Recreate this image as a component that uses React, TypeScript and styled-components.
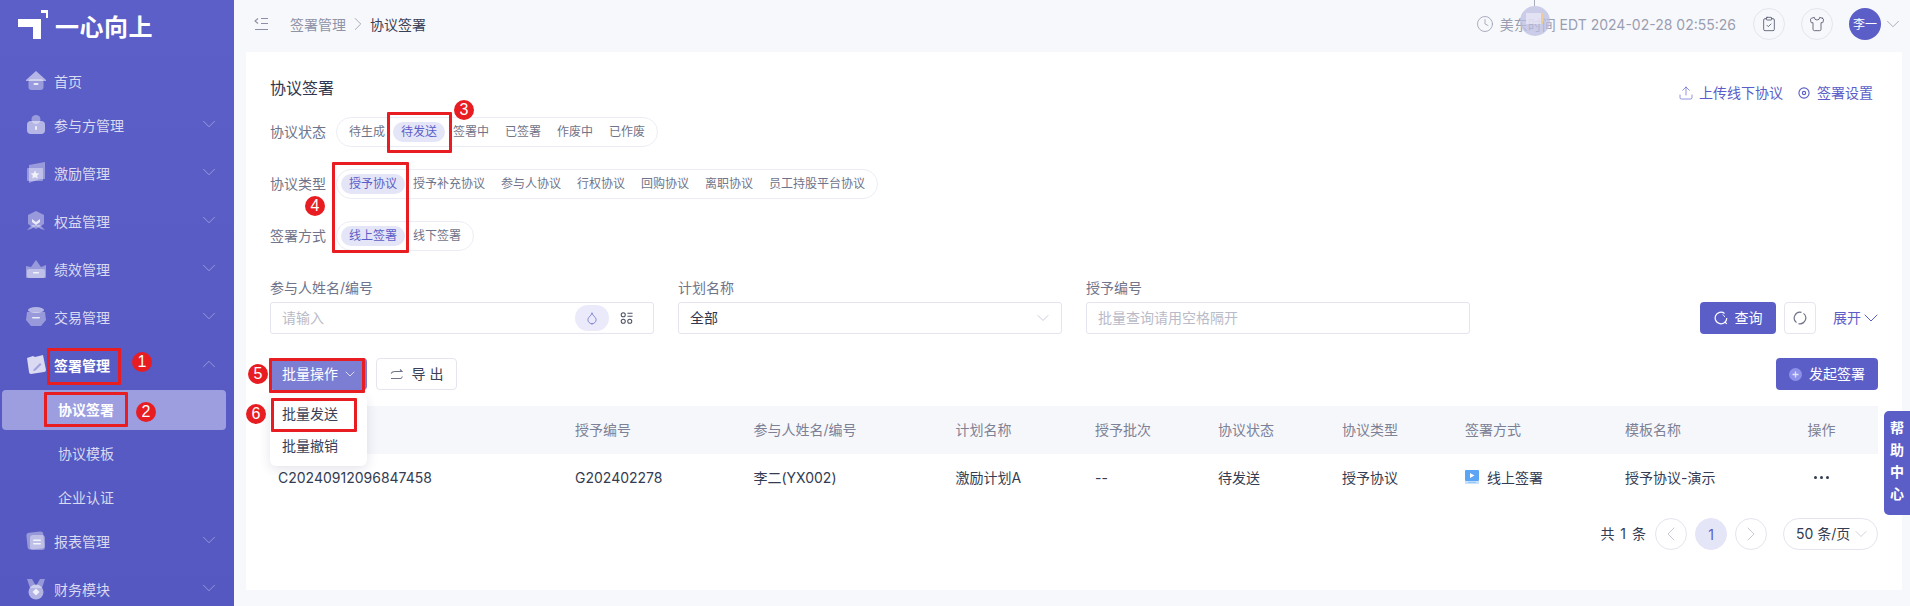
import React from 'react';
import styled, { createGlobalStyle } from 'styled-components';
import {
  ChevronDown,
  ChevronLeft,
  ChevronRight,
  ChevronUp,
  ClipboardCheck,
  Clock,
  Droplet,
  Shirt,
  Upload,
} from 'lucide-react';

const PRIMARY = '#5b5ec7';
const RED = '#e71d22';

const GlobalStyle = createGlobalStyle`
  html, body {
    margin: 0;
    padding: 0;
    background: #f7f8fc;
  }
  body {
    font-family: "Inter", "Noto Sans CJK SC", sans-serif;
    font-size: 14px;
    overflow: hidden;
  }
  * {
    box-sizing: border-box;
  }
`;

type NavKind = 'home' | 'bag' | 'flag' | 'shield' | 'crown' | 'deal' | 'sign' | 'report' | 'medal';

const NavIcon: React.FC<{ kind: NavKind }> = ({ kind }) => {
  const a = 'rgba(255,255,255,0.38)';
  const b = 'rgba(255,255,255,0.55)';
  const c = 'rgba(255,255,255,0.8)';
  return (
    <NavSvg width="22" height="22" viewBox="0 0 22 22">
      {kind === 'home' && (
        <>
          <path d="M1 10 11 1l10 9v1H1z" fill={b} />
          <rect x="3.500" y="9" width="15" height="11" rx="3" fill={a} />
          <rect x="8.500" y="13" width="5" height="2" rx="1" fill={c} />
        </>
      )}
      {kind === 'bag' && (
        <>
          <circle cx="11" cy="5.500" r="4.500" fill={a} />
          <rect x="2" y="7" width="18" height="13" rx="4" fill={b} />
          <rect x="10" y="12" width="2" height="4" rx="1" fill={c} />
        </>
      )}
      {kind === 'flag' && (
        <>
          <path d="M4 3 20 0v17l-5 0-11 4z" fill={a} />
          <rect x="2" y="6" width="16" height="13" rx="1" fill={a} />
          <path d="m10 8.500 1.300 2.700 3 .4-2.200 2 .6 3-2.700-1.500-2.700 1.500.6-3-2.200-2 3-.4z" fill={c} />
        </>
      )}
      {kind === 'shield' && (
        <>
          <path d="m11 1 8 4v9l-8 5-8-5V5z" fill={a} />
          <path d="m2 20 4-1 5-3 5 3 4 1-5-5H7z" fill={a} />
          <path d="m7 9 4 3 4-3v3l-4 3-4-3z" fill={c} />
        </>
      )}
      {kind === 'crown' && (
        <>
          <path d="M1 8 6 9l5-7 5 7 5-2v12a1 1 0 0 1-1 1H2a1 1 0 0 1-1-1z" fill={a} />
          <rect x="2" y="11" width="18" height="9" rx="2" fill={a} />
          <rect x="8" y="14" width="6" height="1.500" rx=".7" fill={c} />
        </>
      )}
      {kind === 'deal' && (
        <>
          <ellipse cx="11" cy="4" rx="8" ry="3" fill={b} />
          <path d="M2 6h18l1 8-5 6H6l-5-6z" fill={a} />
          <rect x="7" y="11" width="8" height="1.500" rx=".7" fill={c} />
        </>
      )}
      {kind === 'sign' && (
        <>
          <path d="M2 4 8 2l2 1 8-2 3 15a2 2 0 0 1-2 2L6 20a2 2 0 0 1-2-2z" fill="rgba(255,255,255,0.78)" />
          <path d="m9 15 6-6 1.500 1.500-6 6-2.500.5z" fill={PRIMARY} opacity=".45" />
        </>
      )}
      {kind === 'report' && (
        <>
          <rect x="2" y="2" width="17" height="17" rx="3" transform="rotate(-6 11 11)" fill={a} />
          <rect x="5" y="5" width="15" height="15" rx="3" fill={a} />
          <rect x="8" y="9.500" width="8" height="1.500" rx=".7" fill={c} />
          <rect x="8" y="13" width="8" height="1.500" rx=".7" fill={c} />
        </>
      )}
      {kind === 'medal' && (
        <>
          <path d="M2 1h5l4 7 4-7h5l-3 9H5z" fill={a} />
          <circle cx="11" cy="14" r="7.500" fill={b} />
          <path d="m11 10.500 3.500 3.500-3.500 3.500L7.500 14z" fill={c} />
        </>
      )}
    </NavSvg>
  );
};

const LogoMark = () => (
  <svg width="32" height="31" viewBox="0 0 32 31">
    <path d="M0 9h23v20h-8V17H0z" fill="#fff" />
    <path d="M23 0h7v8h-2V3h-5z" fill="#fff" />
  </svg>
);

const CollapseIcon = () => (
  <svg width="15" height="14" viewBox="0 0 15 14" fill="none" stroke="#8b8fa3" strokeWidth="1.100">
    <path d="M4 1.500 1 4l3 2.500" />
    <path d="M7 1.500h7M7 6.500h7M1 12.500h13" />
  </svg>
);

const TargetIcon = () => (
  <svg width="12" height="12" viewBox="0 0 13 13" fill="none" stroke={PRIMARY} strokeWidth="1.200">
    <circle cx="6.500" cy="6.500" r="5.500" />
    <circle cx="6.500" cy="6.500" r="1.800" />
  </svg>
);

const SchemeIcon = () => (
  <svg width="13" height="14" viewBox="0 0 14 14" fill="none" stroke="#4a4f63" strokeWidth="1.100">
    <circle cx="3.500" cy="3.500" r="2.200" />
    <circle cx="3.500" cy="10.500" r="2.200" />
    <circle cx="10.500" cy="10.500" r="2.200" />
    <path d="M8 2h5.500M8 5h5.500" />
  </svg>
);

const SearchRing = () => (
  <svg width="14" height="14" viewBox="0 0 14 14" fill="none" stroke="#fff" strokeWidth="1.200">
    <path d="M10.500 2.400A5.800 5.800 0 1 0 12.800 7" />
    <path d="M8.500 3.600A3.800 3.800 0 0 1 10.800 6" strokeWidth=".8" />
    <path d="m10.800 10.800 2 2" />
  </svg>
);

const RefreshRing = () => (
  <svg width="14" height="14" viewBox="0 0 14 14" fill="none" stroke="#70748a" strokeWidth="1.200">
    <path d="M8.500 1.400A5.800 5.800 0 0 0 3.500 11.600" />
    <path d="M5.500 12.600A5.800 5.800 0 0 0 10.500 2.400" />
  </svg>
);

const ExportIcon = () => (
  <svg width="13" height="11" viewBox="0 0 13 11" fill="none" stroke="#70748a" strokeWidth="1.100">
    <path d="M1 4.500C2 2.500 3 2.500 5 2.500h7L10 .5" />
    <path d="M1 9.500h9.500c1 0 1.500-.5 1.800-2" />
  </svg>
);

const PlusDot = () => (
  <svg width="13" height="13" viewBox="0 0 13 13">
    <circle cx="6.500" cy="6.500" r="6.500" fill="#8e91ea" />
    <path d="M6.500 3.500v6M3.500 6.500h6" stroke="#e0e1fa" strokeWidth="1.300" />
  </svg>
);

const PlayDoc = () => (
  <svg width="14" height="14" viewBox="0 0 14 14">
    <rect width="14" height="11" rx="1" fill="#5ca4f4" />
    <rect y="11" width="14" height="3" fill="#c9e2fc" />
    <rect x="3" y="11.800" width="8" height="1" fill="#8cc0f7" />
    <path d="M5 3 9.500 5.500 5 8z" fill="#fff" />
  </svg>
);

const menuTop: { label: string; kind: NavKind }[] = [
  { label: '参与方管理', kind: 'bag' },
  { label: '激励管理', kind: 'flag' },
  { label: '权益管理', kind: 'shield' },
  { label: '绩效管理', kind: 'crown' },
  { label: '交易管理', kind: 'deal' },
];

const statusOptions = ['待生成', '待发送', '签署中', '已签署', '作废中', '已作废'];
const typeOptions = ['授予协议', '授予补充协议', '参与人协议', '行权协议', '回购协议', '离职协议', '员工持股平台协议'];
const signOptions = ['线上签署', '线下签署'];

const columns = ['协议编号', '授予编号', '参与人姓名/编号', '计划名称', '授予批次', '协议状态', '协议类型', '签署方式', '模板名称'];

const App: React.FC = () => {
  return (
    <Page>
      <GlobalStyle />
      <Sidebar>
        <LogoRow>
          <LogoMark />
          <LogoText>一心向上</LogoText>
        </LogoRow>
        <Nav>
          <NavItem $first>
            <NavIcon kind="home" />
            <span>首页</span>
          </NavItem>
          {menuTop.map((m) => (
            <NavItem key={m.label}>
              <NavIcon kind={m.kind} />
              <span>{m.label}</span>
              <NavChevron>
                <ChevronDown size={22} strokeWidth={0.9} />
              </NavChevron>
            </NavItem>
          ))}
          <NavItem $open>
            <NavIcon kind="sign" />
            <span>签署管理</span>
            <NavChevron>
              <ChevronUp size={22} strokeWidth={0.9} />
            </NavChevron>
          </NavItem>
          <SubMenu>
            <SubItem $active>协议签署</SubItem>
            <SubItem>协议模板</SubItem>
            <SubItem>企业认证</SubItem>
          </SubMenu>
          <NavItem>
            <NavIcon kind="report" />
            <span>报表管理</span>
            <NavChevron>
              <ChevronDown size={22} strokeWidth={0.9} />
            </NavChevron>
          </NavItem>
          <NavItem>
            <NavIcon kind="medal" />
            <span>财务模块</span>
            <NavChevron>
              <ChevronDown size={22} strokeWidth={0.9} />
            </NavChevron>
          </NavItem>
        </Nav>
      </Sidebar>

      <Main>
        <Header>
          <CollapseIcon />
          <Crumbs>
            <CrumbLink>签署管理</CrumbLink>
            <ChevronRight size={22} strokeWidth={0.8} color="#8b8fa3" />
            <CrumbNow>协议签署</CrumbNow>
          </Crumbs>
          <HeaderRight>
            <Clock size={18} strokeWidth={1.1} color="#9a9eb0" />
            <TimeText>美东时间 EDT 2024-02-28 02:55:26</TimeText>
            <RoundButton>
              <ClipboardCheck size={16} strokeWidth={1.2} color="#4a4f63" />
            </RoundButton>
            <RoundButton>
              <Shirt size={16} strokeWidth={1.2} color="#4a4f63" />
            </RoundButton>
            <Avatar>李一</Avatar>
            <ChevronDown size={22} strokeWidth={0.9} color="#9a9eb0" />
          </HeaderRight>
          <FloatBall>
            <BallInner />
          </FloatBall>
        </Header>

        <Card>
          <TitleRow>
            <Title>协议签署</Title>
            <TitleLinks>
              <TextLink $gap={5}>
                <Upload size={16} strokeWidth={1} />
                上传线下协议
              </TextLink>
              <TextLink $gap={7}>
                <TargetIcon />
                签署设置
              </TextLink>
            </TitleLinks>
          </TitleRow>

          <Filters>
            <FilterRow>
              <FilterLabel>协议状态</FilterLabel>
              <PillGroup>
                {statusOptions.map((o) => (
                  <Pill key={o} $active={o === '待发送'}>{o}</Pill>
                ))}
              </PillGroup>
            </FilterRow>
            <FilterRow>
              <FilterLabel>协议类型</FilterLabel>
              <PillGroup>
                {typeOptions.map((o) => (
                  <Pill key={o} $active={o === '授予协议'}>{o}</Pill>
                ))}
              </PillGroup>
            </FilterRow>
            <FilterRow>
              <FilterLabel>签署方式</FilterLabel>
              <PillGroup>
                {signOptions.map((o) => (
                  <Pill key={o} $active={o === '线上签署'}>{o}</Pill>
                ))}
              </PillGroup>
            </FilterRow>
          </Filters>

          <QueryRow>
            <Field>
              <FieldLabel>参与人姓名/编号</FieldLabel>
              <InputBox>
                <Placeholder>请输入</Placeholder>
                <DropChip>
                  <Droplet size={14} strokeWidth={1.2} color={PRIMARY} />
                </DropChip>
                <SchemeSlot>
                  <SchemeIcon />
                </SchemeSlot>
              </InputBox>
            </Field>
            <Field>
              <FieldLabel>计划名称</FieldLabel>
              <InputBox>
                <SelectValue>全部</SelectValue>
                <ChevronDown size={20} strokeWidth={0.9} color="#b9bccb" />
              </InputBox>
            </Field>
            <Field>
              <FieldLabel>授予编号</FieldLabel>
              <InputBox>
                <Placeholder>批量查询请用空格隔开</Placeholder>
              </InputBox>
            </Field>
            <QueryActions>
              <PrimaryButton $width={76}>
                <SearchRing />
                <ButtonText>查询</ButtonText>
              </PrimaryButton>
              <IconButton>
                <RefreshRing />
              </IconButton>
              <Expand>
                <ExpandText>展开</ExpandText>
                <ChevronDown size={24} strokeWidth={1} />
              </Expand>
            </QueryActions>
          </QueryRow>

          <Toolbar>
            <ToolLeft>
              <BatchWrap>
                <BatchButton>
                  <ButtonText>批量操作</ButtonText>
                  <ChevronDown size={16} strokeWidth={1.1} />
                </BatchButton>
                <Dropdown>
                  <DropItem>批量发送</DropItem>
                  <DropItem>批量撤销</DropItem>
                </Dropdown>
              </BatchWrap>
              <OutlineButton>
                <ExportIcon />
                <ButtonText>导 出</ButtonText>
              </OutlineButton>
            </ToolLeft>
            <PrimaryButton $width={102}>
              <PlusDot />
              <ButtonText>发起签署</ButtonText>
            </PrimaryButton>
          </Toolbar>

          <TableHead>
            {columns.map((c) => (
              <HeadCell key={c}>{c}</HeadCell>
            ))}
            <HeadCell $center>操作</HeadCell>
          </TableHead>
          <TableRow>
            <Cell>C20240912096847458</Cell>
            <Cell>G202402278</Cell>
            <Cell>李二(YX002)</Cell>
            <Cell>激励计划A</Cell>
            <Cell>--</Cell>
            <Cell>待发送</Cell>
            <Cell>授予协议</Cell>
            <Cell>
              <SignCell>
                <PlayDoc />
                <span>线上签署</span>
              </SignCell>
            </Cell>
            <Cell>授予协议-演示</Cell>
            <Cell $center>
              <Dots>
                <i />
                <i />
                <i />
              </Dots>
            </Cell>
          </TableRow>

          <Pagination>
            <Total>共 1 条</Total>
            <PageCircle>
              <ChevronLeft size={24} strokeWidth={0.8} color="#b9bccb" />
            </PageCircle>
            <PageCircle $active>1</PageCircle>
            <PageCircle>
              <ChevronRight size={24} strokeWidth={0.8} color="#b9bccb" />
            </PageCircle>
            <PageSize>
              <ButtonText>50 条/页</ButtonText>
              <ChevronDown size={20} strokeWidth={0.8} color="#b9bccb" />
            </PageSize>
          </Pagination>
        </Card>
      </Main>

      <HelpTab>
        <span>帮</span>
        <span>助</span>
        <span>中</span>
        <span>心</span>
      </HelpTab>

      <RedBox $x={47} $y={348} $w={74} $h={37} />
      <RedBox $x={44} $y={392} $w={84} $h={35} />
      <RedBox $x={387} $y={112} $w={65} $h={41} />
      <RedBox $x={332} $y={162} $w={77} $h={91} />
      <RedBox $x={269} $y={358} $w={96} $h={35} />
      <RedBox $x={271} $y={398} $w={86} $h={34} />
      <Badge $cx={142} $cy={362}>1</Badge>
      <Badge $cx={146} $cy={412}>2</Badge>
      <Badge $cx={464} $cy={110}>3</Badge>
      <Badge $cx={315} $cy={206}>4</Badge>
      <Badge $cx={258} $cy={374}>5</Badge>
      <Badge $cx={256} $cy={414}>6</Badge>
    </Page>
  );
};

const Page = styled.div`
  position: relative;
  display: flex;
  width: 100%;
  height: 606px;
  overflow: hidden;
  background: #f7f8fc;
`;

const Sidebar = styled.aside`
  width: 234px;
  flex: none;
  background: linear-gradient(180deg, #5c5fc8, #5558c0);
  overflow: hidden;
`;

const NavSvg = styled.svg`
  flex: none;
  filter: blur(0.35px);
`;

const LogoRow = styled.div`
  display: flex;
  align-items: flex-start;
  height: 62px;
  padding: 10px 0 0 18px;
`;

const LogoText = styled.div`
  margin: 3px 0 0 5px;
  color: #fff;
  font-size: 24px;
  line-height: 30px;
  font-weight: 700;
  letter-spacing: 0.5px;
`;

const Nav = styled.nav`
  display: flex;
  flex-direction: column;
  gap: 8px;
`;

const NavItem = styled.div<{ $first?: boolean; $open?: boolean }>`
  display: flex;
  align-items: center;
  flex: none;
  gap: 7px;
  height: 40px;
  padding: 0 14px 2px 25px;
  margin-bottom: ${(p) => (p.$first ? '-4px' : '0')};
  color: ${(p) => (p.$open ? '#fff' : 'rgba(255,255,255,0.78)')};
  font-weight: ${(p) => (p.$open ? 700 : 400)};
`;

const NavChevron = styled.span`
  display: flex;
  margin: -3px 0 0 auto;
  color: rgba(255, 255, 255, 0.45);
`;

const SubMenu = styled.div`
  display: flex;
  flex-direction: column;
  gap: 4px;
  margin: -4px 0;
`;

const SubItem = styled.div<{ $active?: boolean }>`
  display: flex;
  align-items: center;
  height: 40px;
  margin: 0 8px 0 2px;
  padding: 0 0 2px 56px;
  border-radius: 4px;
  background: ${(p) => (p.$active ? '#9c9edf' : 'transparent')};
  color: ${(p) => (p.$active ? '#fff' : 'rgba(255,255,255,0.78)')};
  font-weight: ${(p) => (p.$active ? 700 : 400)};
`;

const Main = styled.main`
  flex: 1;
  min-width: 0;
  display: flex;
  flex-direction: column;
`;

const Header = styled.header`
  position: relative;
  display: flex;
  align-items: center;
  flex: none;
  height: 52px;
  padding: 0 6px 5px 20px;
`;

const Crumbs = styled.div`
  display: flex;
  align-items: center;
  gap: 1px;
  margin-left: 21px;
`;

const CrumbLink = styled.span`
  color: #8f93a6;
`;

const CrumbNow = styled.span`
  color: #3a4157;
`;

const HeaderRight = styled.div`
  display: flex;
  align-items: center;
  margin-left: auto;
`;

const TimeText = styled.span`
  margin: 0 17px 0 6px;
  color: #9a9eb0;
`;

const RoundButton = styled.div`
  display: flex;
  align-items: center;
  justify-content: center;
  width: 32px;
  height: 32px;
  margin-right: 16px;
  border: 1px solid #e4e5ee;
  border-radius: 50%;
`;

const Avatar = styled.div`
  display: flex;
  align-items: center;
  justify-content: center;
  width: 32px;
  height: 32px;
  margin-right: 1px;
  border-radius: 50%;
  background: ${PRIMARY};
  color: #fff;
  font-size: 12px;
`;

const FloatBall = styled.div`
  position: absolute;
  left: 1286px;
  top: 6px;
  width: 30px;
  height: 30px;
  border-radius: 50%;
  background: rgba(186, 187, 225, 0.72);
  &::before {
    content: '';
    position: absolute;
    left: 14px;
    top: -6px;
    width: 1px;
    height: 6px;
    background: #a9abb8;
  }
`;

const BallInner = styled.div`
  position: absolute;
  left: 6px;
  top: 7px;
  width: 17px;
  height: 11px;
  background: rgba(238, 238, 250, 0.65);
  border-right: 2px solid rgba(240, 200, 130, 0.8);
`;

const Card = styled.section`
  flex: none;
  height: 538px;
  margin: 0 8px 0 12px;
  padding: 24px 24px 0;
  background: #fff;
`;

const TitleRow = styled.div`
  display: flex;
  justify-content: space-between;
  height: 24px;
`;

const Title = styled.h2`
  margin: 0;
  color: #2f3750;
  font-size: 16px;
  line-height: 24px;
  font-weight: 400;
`;

const TitleLinks = styled.div`
  display: flex;
  gap: 15px;
  padding: 6px 5px 0 0;
`;

const TextLink = styled.a<{ $gap: number }>`
  display: flex;
  align-items: center;
  gap: ${(p) => p.$gap}px;
  height: 20px;
  color: ${PRIMARY};
  svg {
    margin-top: 2px;
  }
`;

const Filters = styled.div`
  display: flex;
  flex-direction: column;
  gap: 22px;
  margin-top: 17px;
`;

const FilterRow = styled.div`
  display: flex;
  align-items: center;
  height: 30px;
`;

const FilterLabel = styled.div`
  width: 66px;
  padding-bottom: 2px;
  color: #70748a;
`;

const PillGroup = styled.div`
  display: flex;
  align-items: center;
  height: 30px;
  padding: 0 4px;
  border: 1px solid #ecedf4;
  border-radius: 15px;
`;

const Pill = styled.div<{ $active?: boolean }>`
  height: 20px;
  padding: 0 8px;
  border-radius: 10px;
  background: ${(p) => (p.$active ? '#e5e5f8' : 'transparent')};
  color: ${(p) => (p.$active ? PRIMARY : '#70748a')};
  font-size: 12px;
  line-height: 20px;
`;

const QueryRow = styled.div`
  display: flex;
  align-items: flex-end;
  gap: 24px;
  margin-top: 28px;
`;

const Field = styled.div`
  width: 384px;
`;

const FieldLabel = styled.div`
  height: 20px;
  margin-bottom: 3px;
  color: #70748a;
  line-height: 18px;
`;

const InputBox = styled.div`
  display: flex;
  align-items: center;
  justify-content: space-between;
  height: 32px;
  padding: 0 8px 0 11px;
  border: 1px solid #e4e5ee;
  border-radius: 3px;
`;

const Placeholder = styled.span`
  flex: 1;
  padding-bottom: 2px;
  color: #b9bbc8;
`;

const SelectValue = styled.span`
  padding-bottom: 2px;
  color: #2f3750;
`;

const DropChip = styled.div`
  display: flex;
  align-items: center;
  justify-content: center;
  width: 34px;
  height: 26px;
  border-radius: 13px;
  background: #eaeafa;
`;

const SchemeSlot = styled.div`
  display: flex;
  width: 36px;
  padding-left: 11px;
`;

const QueryActions = styled.div`
  display: flex;
  align-items: center;
  margin-left: auto;
  gap: 8px;
  height: 32px;
`;

const ButtonText = styled.span`
  padding-bottom: 2px;
`;

const PrimaryButton = styled.button<{ $width: number }>`
  display: flex;
  align-items: center;
  justify-content: center;
  gap: 7px;
  width: ${(p) => p.$width}px;
  height: 32px;
  padding: 0;
  border: 0;
  border-radius: 4px;
  background: ${PRIMARY};
  color: #fff;
  font: inherit;
`;

const IconButton = styled.button`
  display: flex;
  align-items: center;
  justify-content: center;
  width: 32px;
  height: 32px;
  padding: 0;
  border: 1px solid #e4e5ee;
  border-radius: 4px;
  background: #fff;
`;

const Expand = styled.div`
  display: flex;
  align-items: center;
  width: 45px;
  margin-left: 9px;
  color: ${PRIMARY};
  svg {
    flex: none;
    margin-left: -2px;
  }
`;

const ExpandText = styled.span`
  flex: none;
  padding-bottom: 2px;
`;

const Toolbar = styled.div`
  display: flex;
  align-items: center;
  justify-content: space-between;
  margin-top: 24px;
`;

const ToolLeft = styled.div`
  display: flex;
  gap: 9px;
`;

const BatchWrap = styled.div`
  position: relative;
`;

const BatchButton = styled.button`
  display: flex;
  align-items: center;
  gap: 4px;
  width: 97px;
  height: 32px;
  padding: 0 0 0 12px;
  border: 0;
  border-radius: 4px;
  background: #7c7ed3;
  color: #fff;
  font: inherit;
`;

const Dropdown = styled.div`
  position: absolute;
  left: 0;
  top: 37px;
  z-index: 2;
  width: 97px;
  height: 71px;
  padding-top: 4px;
  border-radius: 6px;
  background: #fff;
  box-shadow: 0 3px 12px rgba(40, 45, 90, 0.13);
`;

const DropItem = styled.div`
  height: 32px;
  padding-left: 12px;
  color: #3a4157;
  line-height: 30px;
`;

const OutlineButton = styled.button`
  display: flex;
  align-items: center;
  justify-content: center;
  gap: 9px;
  width: 81px;
  height: 32px;
  padding: 0;
  border: 1px solid #e4e5ee;
  border-radius: 4px;
  background: #fff;
  color: #3a4157;
  font: inherit;
`;

const tableColumns = '297px 178.5px 202px 139.5px 123px 124px 123px 160px 148px 113px';

const TableHead = styled.div`
  display: grid;
  grid-template-columns: ${tableColumns};
  align-items: center;
  height: 48px;
  margin-top: 16px;
  background: #f6f7fb;
`;

const HeadCell = styled.div<{ $center?: boolean }>`
  padding: 0 0 3px ${(p) => (p.$center ? '0' : '8px')};
  color: #7d8195;
  text-align: ${(p) => (p.$center ? 'center' : 'left')};
`;

const TableRow = styled.div`
  display: grid;
  grid-template-columns: ${tableColumns};
  align-items: center;
  height: 48px;
`;

const Cell = styled.div<{ $center?: boolean }>`
  display: flex;
  justify-content: ${(p) => (p.$center ? 'center' : 'flex-start')};
  padding: 0 0 2px ${(p) => (p.$center ? '0' : '8px')};
  color: #333c52;
`;

const SignCell = styled.span`
  display: flex;
  align-items: center;
  gap: 8px;
`;

const Dots = styled.span`
  display: flex;
  gap: 3px;
  i {
    width: 3px;
    height: 3px;
    border-radius: 50%;
    background: #333c52;
  }
`;

const Pagination = styled.div`
  display: flex;
  align-items: center;
  justify-content: flex-end;
  gap: 8px;
  margin-top: 16px;
`;

const Total = styled.span`
  margin-right: 1px;
  padding-bottom: 2px;
  color: #333c52;
  word-spacing: 2px;
`;

const PageCircle = styled.div<{ $active?: boolean }>`
  display: flex;
  align-items: center;
  justify-content: center;
  width: 32px;
  height: 32px;
  border: 1px solid ${(p) => (p.$active ? '#e5e5f8' : '#e4e5ee')};
  border-radius: 50%;
  background: ${(p) => (p.$active ? '#e5e5f8' : '#fff')};
  color: ${PRIMARY};
`;

const PageSize = styled.div`
  display: flex;
  align-items: center;
  justify-content: space-between;
  width: 95px;
  height: 32px;
  margin-left: 8px;
  padding: 0 6px 0 12px;
  border: 1px solid #e4e5ee;
  border-radius: 16px;
  color: #333c52;
`;

const HelpTab = styled.div`
  position: absolute;
  right: 0;
  top: 411px;
  display: flex;
  flex-direction: column;
  align-items: center;
  gap: 4px;
  width: 26px;
  height: 104px;
  padding-top: 8px;
  border-radius: 5px 0 0 5px;
  background: ${PRIMARY};
  color: #fff;
  font-weight: 700;
  line-height: 18px;
`;

const RedBox = styled.div<{ $x: number; $y: number; $w: number; $h: number }>`
  position: absolute;
  left: ${(p) => p.$x}px;
  top: ${(p) => p.$y}px;
  width: ${(p) => p.$w}px;
  height: ${(p) => p.$h}px;
  z-index: 5;
  border: 3px solid ${RED};
  border-radius: 1px;
`;

const Badge = styled.div<{ $cx: number; $cy: number }>`
  position: absolute;
  left: ${(p) => p.$cx - 10}px;
  top: ${(p) => p.$cy - 10}px;
  z-index: 6;
  width: 20px;
  height: 20px;
  border-radius: 50%;
  background: ${RED};
  color: #fff;
  font-family: "Liberation Sans", sans-serif;
  font-size: 16px;
  line-height: 20px;
  text-align: center;
`;

export default App;
